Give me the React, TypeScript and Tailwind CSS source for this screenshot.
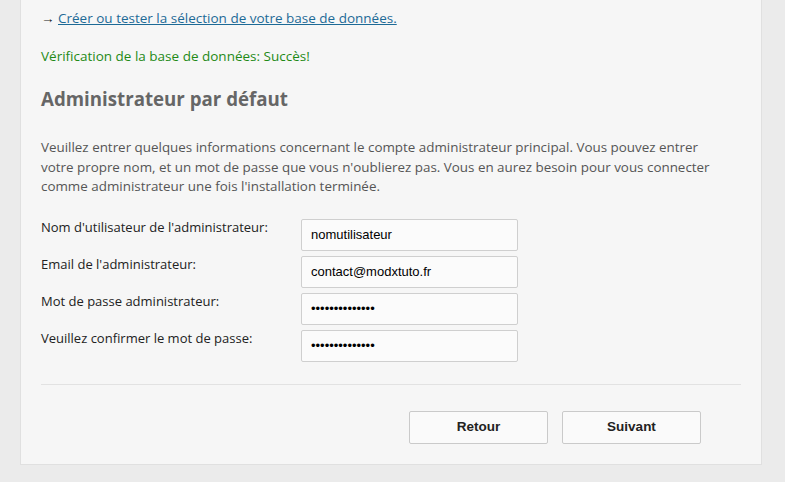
import { useState } from "react"

const FIELDS = [
  { label: "Nom d'utilisateur de l'administrateur:", value: "nomutilisateur", type: "text" },
  { label: "Email de l'administrateur:", value: "contact@modxtuto.fr", type: "text" },
  { label: "Mot de passe administrateur:", value: "motdepasse1234", type: "password" },
  { label: "Veuillez confirmer le mot de passe:", value: "motdepasse1234", type: "password" },
]

export default function App() {
  const [values, setValues] = useState(FIELDS.map((f) => f.value))

  return (
    <div className="h-[482px] w-[785px] overflow-hidden bg-[#ebebeb] font-['Open_Sans',sans-serif]">
      <div className="ml-[20px] w-[742px] border-x border-b border-[#e0e0e0] bg-[#f6f6f6] px-[20px] pb-[20px] pt-[8px]">
        {/* Database check */}
        <p className="text-[13.5px] leading-[20px] text-[#222]">
          → <a href="#" className="text-[#1d6a96] underline">Créer ou tester la sélection de votre base de données.</a>
        </p>
        <p className="mt-[18px] text-[13.5px] leading-[20px] text-[#1f8a16]">
          Vérification de la base de données: Succès!
        </p>

        <h2 className="mt-[21px] text-[18.7px] font-bold leading-[24px] text-[#666]">Administrateur par défaut</h2>

        <p className="mt-[27px] whitespace-nowrap text-[13.4px] leading-[19.5px] text-[#555]">
          Veuillez entrer quelques informations concernant le compte administrateur principal. Vous pouvez entrer
          <br />
          votre propre nom, et un mot de passe que vous n'oublierez pas. Vous en aurez besoin pour vous connecter
          <br />
          comme administrateur une fois l'installation terminée.
        </p>

        {/* Form */}
        <div className="mt-[22px] flex flex-col gap-[5px]">
          {FIELDS.map((f, i) => (
            <div key={i} className="flex items-start">
              <label className="w-[260px] shrink-0 text-[13px] leading-[16px] text-[#222]">{f.label}</label>
              <input
                type={f.type}
                value={values[i]}
                onChange={(e) => setValues(values.map((v, j) => (j === i ? e.target.value : v)))}
                className="h-[32px] w-[217px] rounded-[2px] border border-[#cfcfcf] bg-[#fbfbfb] px-[9px] font-['Liberation_Sans',Arial,sans-serif] text-[13px] text-black outline-none"
              />
            </div>
          ))}
        </div>

        <div className="mt-[22px] h-px bg-[#e2e2e2]" />

        <div className="mt-[26px] flex justify-end gap-[14px] pr-[40px]">
          <button className="h-[33px] w-[139px] rounded-[2px] border border-[#cacaca] bg-[#fafafa] font-['Liberation_Sans',Arial,sans-serif] text-[13.5px] font-bold text-[#222]">
            Retour
          </button>
          <button className="h-[33px] w-[139px] rounded-[2px] border border-[#cacaca] bg-[#fafafa] font-['Liberation_Sans',Arial,sans-serif] text-[13.5px] font-bold text-[#222]">
            Suivant
          </button>
        </div>
      </div>
    </div>
  )
}
